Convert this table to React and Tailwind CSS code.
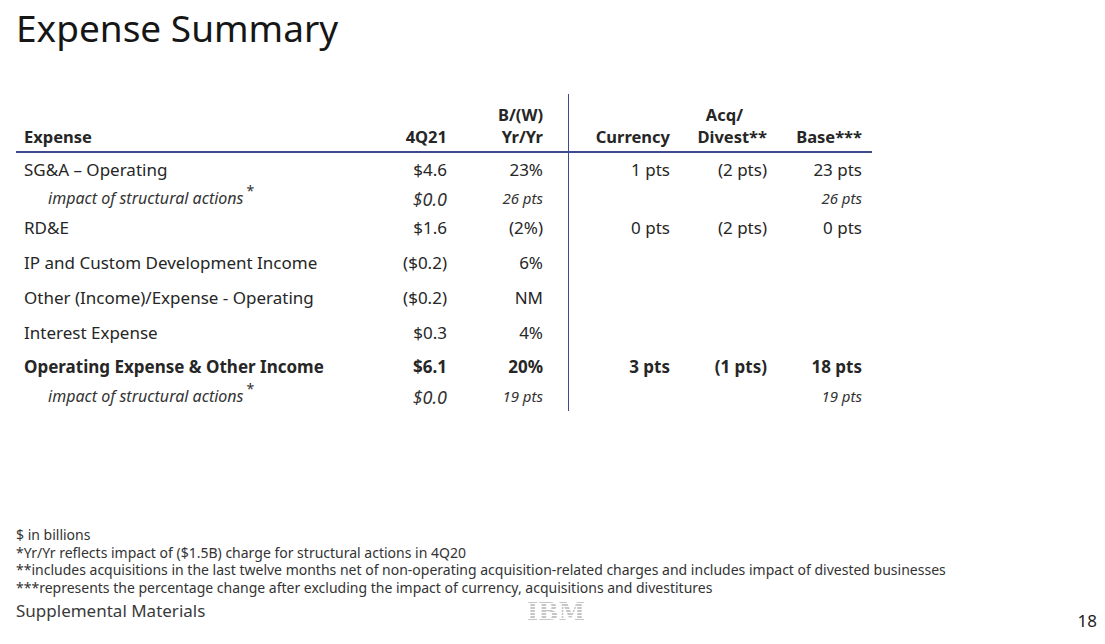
import React from "react";

const F = { fontFamily: '"Noto Sans", "Open Sans", sans-serif' };

const rows = [
  { label: "SG&A – Operating", v: "$4.6", y: "23%", c: "1 pts", a: "(2 pts)", b: "23 pts", h: "h-[33px]" },
  { label: "impact of structural actions", star: true, italic: true, v: "$0.0", y: "26 pts", c: "", a: "", b: "26 pts", h: "h-[25px]" },
  { label: "RD&E", v: "$1.6", y: "(2%)", c: "0 pts", a: "(2 pts)", b: "0 pts", h: "h-[34px]" },
  { label: "IP and Custom Development Income", v: "($0.2)", y: "6%", c: "", a: "", b: "", h: "h-[35px]" },
  { label: "Other (Income)/Expense - Operating", v: "($0.2)", y: "NM", c: "", a: "", b: "", h: "h-[35px]" },
  { label: "Interest Expense", v: "$0.3", y: "4%", c: "", a: "", b: "", h: "h-[35px]" },
  { label: "Operating Expense & Other Income", bold: true, v: "$6.1", y: "20%", c: "3 pts", a: "(1 pts)", b: "18 pts", h: "h-[34px]" },
  { label: "impact of structural actions", star: true, italic: true, v: "$0.0", y: "19 pts", c: "", a: "", b: "19 pts", h: "h-[27px]" },
];

function Row({ r }) {
  const base = r.italic
    ? "italic text-[15px] text-[#333]"
    : r.bold
    ? "font-bold text-[17px]"
    : "text-[17px]";
  const align = r.italic ? "items-start" : "items-center";
  const cell = `flex ${align} justify-end ${r.h} ${base}`;
  return (
    <>
      <div className={`flex ${align} ${r.h} ${base} ${r.italic ? "pl-[32px] text-[16px]" : "pl-[8px]"}`}>
        {r.label}
        {r.star && <span className="relative -top-[6px] text-[14px] not-italic ml-[3px]">*</span>}
      </div>
      <div className={`${cell} pr-[10px] ${r.italic ? "text-[18px]" : ""}`}>{r.v}</div>
      <div className={`${cell} pr-[25px] ${r.italic ? "pt-[1px]" : ""}`}>{r.y}</div>
      <div className={`${cell} pr-[10px] border-l border-[#3d4b8e]`}>{r.c}</div>
      <div className={`${cell} pr-[10px]`}>{r.a}</div>
      <div className={`${cell} pr-[10px] ${r.italic ? "pt-[1px]" : ""}`}>{r.b}</div>
    </>
  );
}

const H = "h-[59px] font-bold text-[16.5px] leading-[22px] border-b-2 border-[#3d4b8e] pb-[3px]";

export default function App() {
  return (
    <div className="w-[1105px] h-[644px] bg-white text-[#262626] flex flex-col overflow-hidden" style={F}>
      <h1 className="ml-[16px] mt-[8px] text-[37px] leading-[40px] text-[#161616] font-normal">Expense Summary</h1>
      <div className="ml-[16px] mt-[46px] w-[856px] grid grid-cols-[344px_97px_111px_112px_97px_95px]">
        <div className={`${H} flex items-end pl-[8px]`}>Expense</div>
        <div className={`${H} flex items-end justify-end pr-[10px]`}>4Q21</div>
        <div className={`${H} flex flex-col items-end justify-end pr-[25px]`}>
          <span>B/(W)</span>
          <span>Yr/Yr</span>
        </div>
        <div className={`${H} flex items-end justify-end pr-[10px] border-l`}>Currency</div>
        <div className={`${H} flex flex-col items-end justify-end pr-[10px]`}>
          <span className="pr-[24px]">Acq/</span>
          <span>Divest**</span>
        </div>
        <div className={`${H} flex items-end justify-end pr-[10px]`}>Base***</div>
        {rows.map((r, i) => (
          <Row key={i} r={r} />
        ))}
      </div>
      <div className="mt-auto mb-[2px] ml-[16px] text-[14px] leading-[17.4px] text-[#333] whitespace-pre">
        <div>$ in billions</div>
        <div>*Yr/Yr reflects impact of ($1.5B) charge for structural actions in 4Q20</div>
        <div>**includes acquisitions in the last twelve months net of non-operating acquisition-related charges and includes impact of divested businesses</div>
        <div>***represents the percentage change after excluding the impact of currency, acquisitions and divestitures</div>
      </div>
      <div className="relative h-[42px] mb-[4px] flex items-start">
        <div className="ml-[16px] mt-[2px] text-[17px] leading-[22px] text-[#3a3a3a]">Supplemental Materials</div>
        <div
          className="absolute left-[527px] top-[3px] text-[24px] leading-[22px] font-bold tracking-[0px] text-transparent bg-clip-text bg-[repeating-linear-gradient(to_bottom,#c6c6c6_0px,#c6c6c6_2px,transparent_2px,transparent_3px)]"
          style={{ fontFamily: '"DejaVu Serif", serif' }}
        >
          IBM
        </div>
        <div className="ml-auto mr-[8px] mt-[12px] text-[17px] leading-[22px] text-[#222]">18</div>
      </div>
    </div>
  );
}
